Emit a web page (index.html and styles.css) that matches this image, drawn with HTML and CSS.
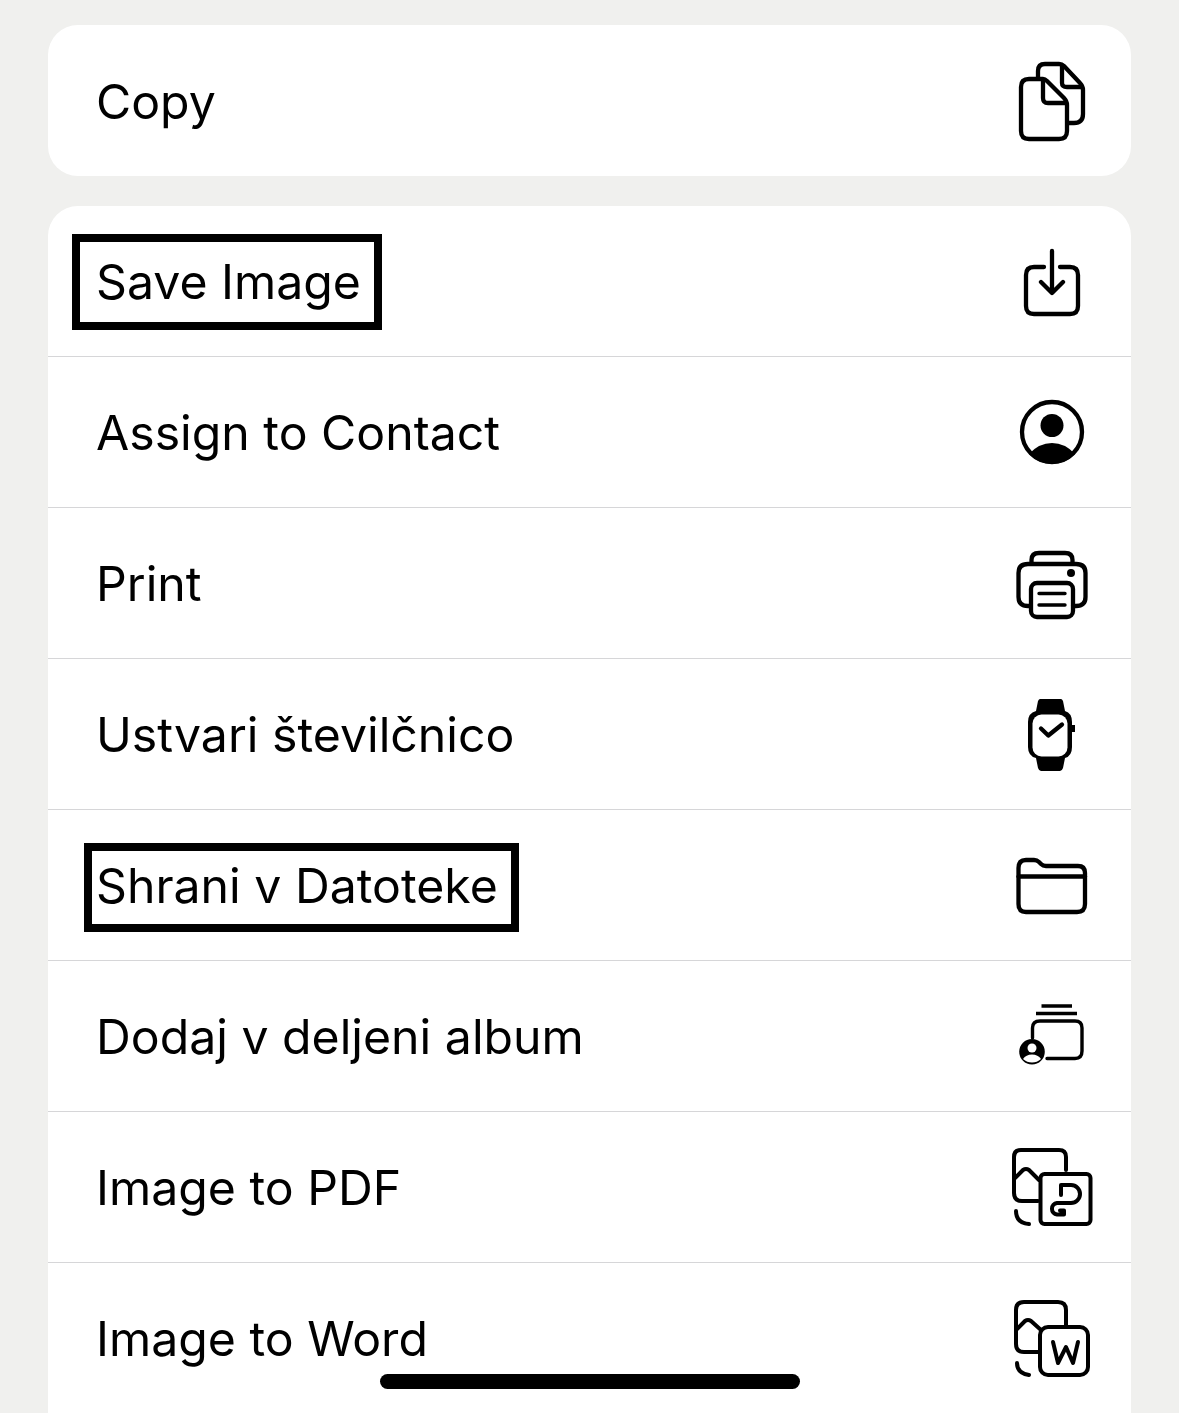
FILE: index.html

```html
<!DOCTYPE html>
<html lang="en">

<head>
    <meta charset="UTF-8">
    <meta name="viewport" content="width=device-width, initial-scale=1.0">
    <title>Share sheet actions</title>
    <link rel="stylesheet" href="styles.css">
</head>

<body>
    <div class="sheet">
        <div class="card">
            <div class="row">
                <span class="label">Copy</span>
                <svg class="icon" viewBox="0 0 100 100">
                    <path d="M36 26V20Q36 13 43 13H57Q60 13 62 15L78 32Q81 35 81 39V63Q81 72 72 72H66" />
                    <path d="M60 15V32Q60 36 65 36H80" />
                    <path d="M27 28H41Q43 28 45 30L62 47Q65 50 65 54V80Q65 88 57 88H27Q19 88 19 80V36Q19 28 27 28Z" />
                    <path d="M41 29V47Q41 52 46 52H64" />
                </svg>
            </div>
        </div>

        <div class="card">
            <div class="row">
                <span class="label mark-save">Save Image</span>
                <svg class="icon" viewBox="0 0 100 100">
                    <path d="M42 36H32Q24 36 24 44V75Q24 83 32 83H68Q76 83 76 75V44Q76 36 68 36H58" />
                    <path d="M50 20V61M39 51L50 62L61 51" />
                </svg>
            </div>
            <div class="row">
                <span class="label">Assign to Contact</span>
                <svg class="icon" viewBox="0 0 100 100">
                    <circle cx="50" cy="50" r="30" />
                    <circle class="solid" cx="50" cy="43.5" r="11.5" />
                    <path class="solid" d="M27 72Q37 61 50 61Q63 61 73 72A32 32 0 0 1 50 82A32 32 0 0 1 27 72Z" />
                </svg>
            </div>
            <div class="row">
                <span class="label">Print</span>
                <svg class="icon" viewBox="0 0 100 100">
                    <path d="M29.5 30V27Q29.5 20 37 20H63Q70.5 20 70.5 27V30" />
                    <path d="M29 73H26Q16.5 73 16.5 64V40Q16.5 31 26 31H74Q83.5 31 83.5 40V64Q83.5 73 74 73H71" />
                    <rect x="29" y="50" width="42" height="34" rx="6" />
                    <path class="thin" d="M37 60.5H63M37 72H63" />
                    <circle class="solid" cx="69" cy="40" r="4" />
                </svg>
            </div>
            <div class="row">
                <span class="label">Ustvari številčnico</span>
                <svg class="icon" viewBox="0 0 100 100">
                    <path class="solid" d="M38 15H59Q60 15 61 17L63 27Q70 29 70 38V41H73V48H70V63Q70 72 63 74L61 84Q60 87 58 87H39Q37 87 36 84L34 74Q26 72 26 63V38Q26 29 34 27L36 17Q37 15 38 15Z" />
                    <rect class="hole" x="30.5" y="30.5" width="35" height="42" rx="9" />
                    <path d="M39 44.5L46.3 51.5L60 40.5" />
                </svg>
            </div>
            <div class="row">
                <span class="label mark-files">Shrani v Datoteke</span>
                <svg class="icon" viewBox="0 0 100 100">
                    <path d="M24 25H32Q35 25 37 27L39 29Q41 31 44 31H76Q83 31 83 38V69Q83 77 75 77H24Q16.5 77 16.5 69V33Q16.5 25 24 25Z" />
                    <path d="M16.5 41.5H83" />
                </svg>
            </div>
            <div class="row">
                <span class="label">Dodaj v deljeni album</span>
                <svg class="icon" viewBox="0 0 100 100">
                    <path class="thin butt" d="M39.5 20H70M34 27.5H75" />
                    <path class="thin" d="M30.5 52V42Q30.5 35 38 35H73Q80 35 80 42V65Q80 72.5 73 72.5H45" />
                    <circle class="solid" cx="30" cy="65.7" r="12.8" />
                    <circle class="hole" cx="30" cy="62" r="4.5" />
                    <path class="hole" d="M21 73Q24 68.5 30 68.5Q36 68.5 39 73Q35 76.5 30 76.5Q25 76.5 21 73Z" />
                </svg>
            </div>
            <div class="row">
                <span class="label">Image to PDF</span>
                <svg class="icon icon-doc" viewBox="0 0 100 100">
                    <path d="M64 33V20Q64 13 57 13H19Q12 13 12 20V56Q12 64 20 64H36" />
                    <path d="M13 41L21 33Q24 31 27 33L37 43" />
                    <path d="M14 74Q14 86 27 87" />
                    <rect x="38.5" y="37" width="50" height="50" rx="4" />
                    <path d="M59 58V48H69A9 9 0 0 1 69 66H55A5.8 5.8 0 0 0 55 77.5H62V73.5H58" />
                </svg>
            </div>
            <div class="row">
                <span class="label">Image to Word</span>
                <svg class="icon icon-doc" viewBox="0 0 100 100">
                    <path d="M64 37V22Q64 14 56 14H22Q14 14 14 22V56Q14 64 22 64H38" />
                    <path d="M15 41L23 33Q26 31 29 33L39 42" />
                    <path d="M15 75Q15 85 27 87" />
                    <rect x="38" y="39" width="48" height="48" rx="8" />
                    <path d="M51 54L56 75L64 59L71 75L76 54" />
                </svg>
            </div>
        </div>
    </div>

    <div class="home-bar"></div>
</body>

</html>
```

FILE: styles.css

```css
* {
    margin: 0;
    padding: 0;
    box-sizing: border-box;
}

html,
body {
    height: 1413px;
    overflow: hidden;
}

body {
    position: relative;
    background: #f0f0ee;
    font-family: Inter, "Liberation Sans", sans-serif;
    color: #000;
}

.sheet {
    display: flex;
    flex-direction: column;
    gap: 30px;
    padding: 25px 48px 0;
}

.card {
    background: #fff;
    border-radius: 30px;
}

/* the long list runs off the bottom of the screen */
.card:last-child {
    padding-bottom: 40px;
}

.row {
    display: flex;
    align-items: center;
    justify-content: space-between;
    height: 151px;
    padding: 0 29px 0 48px;
    border-bottom: 1px solid #d6d6d8;
}

.card:first-child .row {
    border-bottom: 0;
}

.label {
    position: relative;
    margin-top: 2px;
    font-size: 48.2px;
    line-height: 60px;
}

/* black boxes drawn over the screenshot */
.mark-save::after,
.mark-files::after {
    content: "";
    position: absolute;
    box-sizing: border-box;
    border: 8px solid #000;
}

.mark-save::after {
    left: -24px;
    top: -18px;
    width: 310px;
    height: 96px;
}

.mark-files::after {
    left: -12px;
    top: -13px;
    width: 435px;
    height: 89px;
}

/* icons */
.icon {
    flex: none;
    width: 100px;
    height: 100px;
    fill: none;
    stroke: #000;
    stroke-width: 4.3;
    stroke-linecap: round;
    stroke-linejoin: round;
}

.icon-doc {
    stroke-width: 4;
}

.icon .solid {
    fill: #000;
    stroke: none;
}

.icon .hole {
    fill: #fff;
    stroke: none;
}

.icon .thin {
    stroke-width: 3.4;
}

.icon .butt {
    stroke-linecap: butt;
}

.home-bar {
    position: absolute;
    left: 380px;
    top: 1374px;
    width: 420px;
    height: 15px;
    border-radius: 8px;
    background: #000;
}
```
